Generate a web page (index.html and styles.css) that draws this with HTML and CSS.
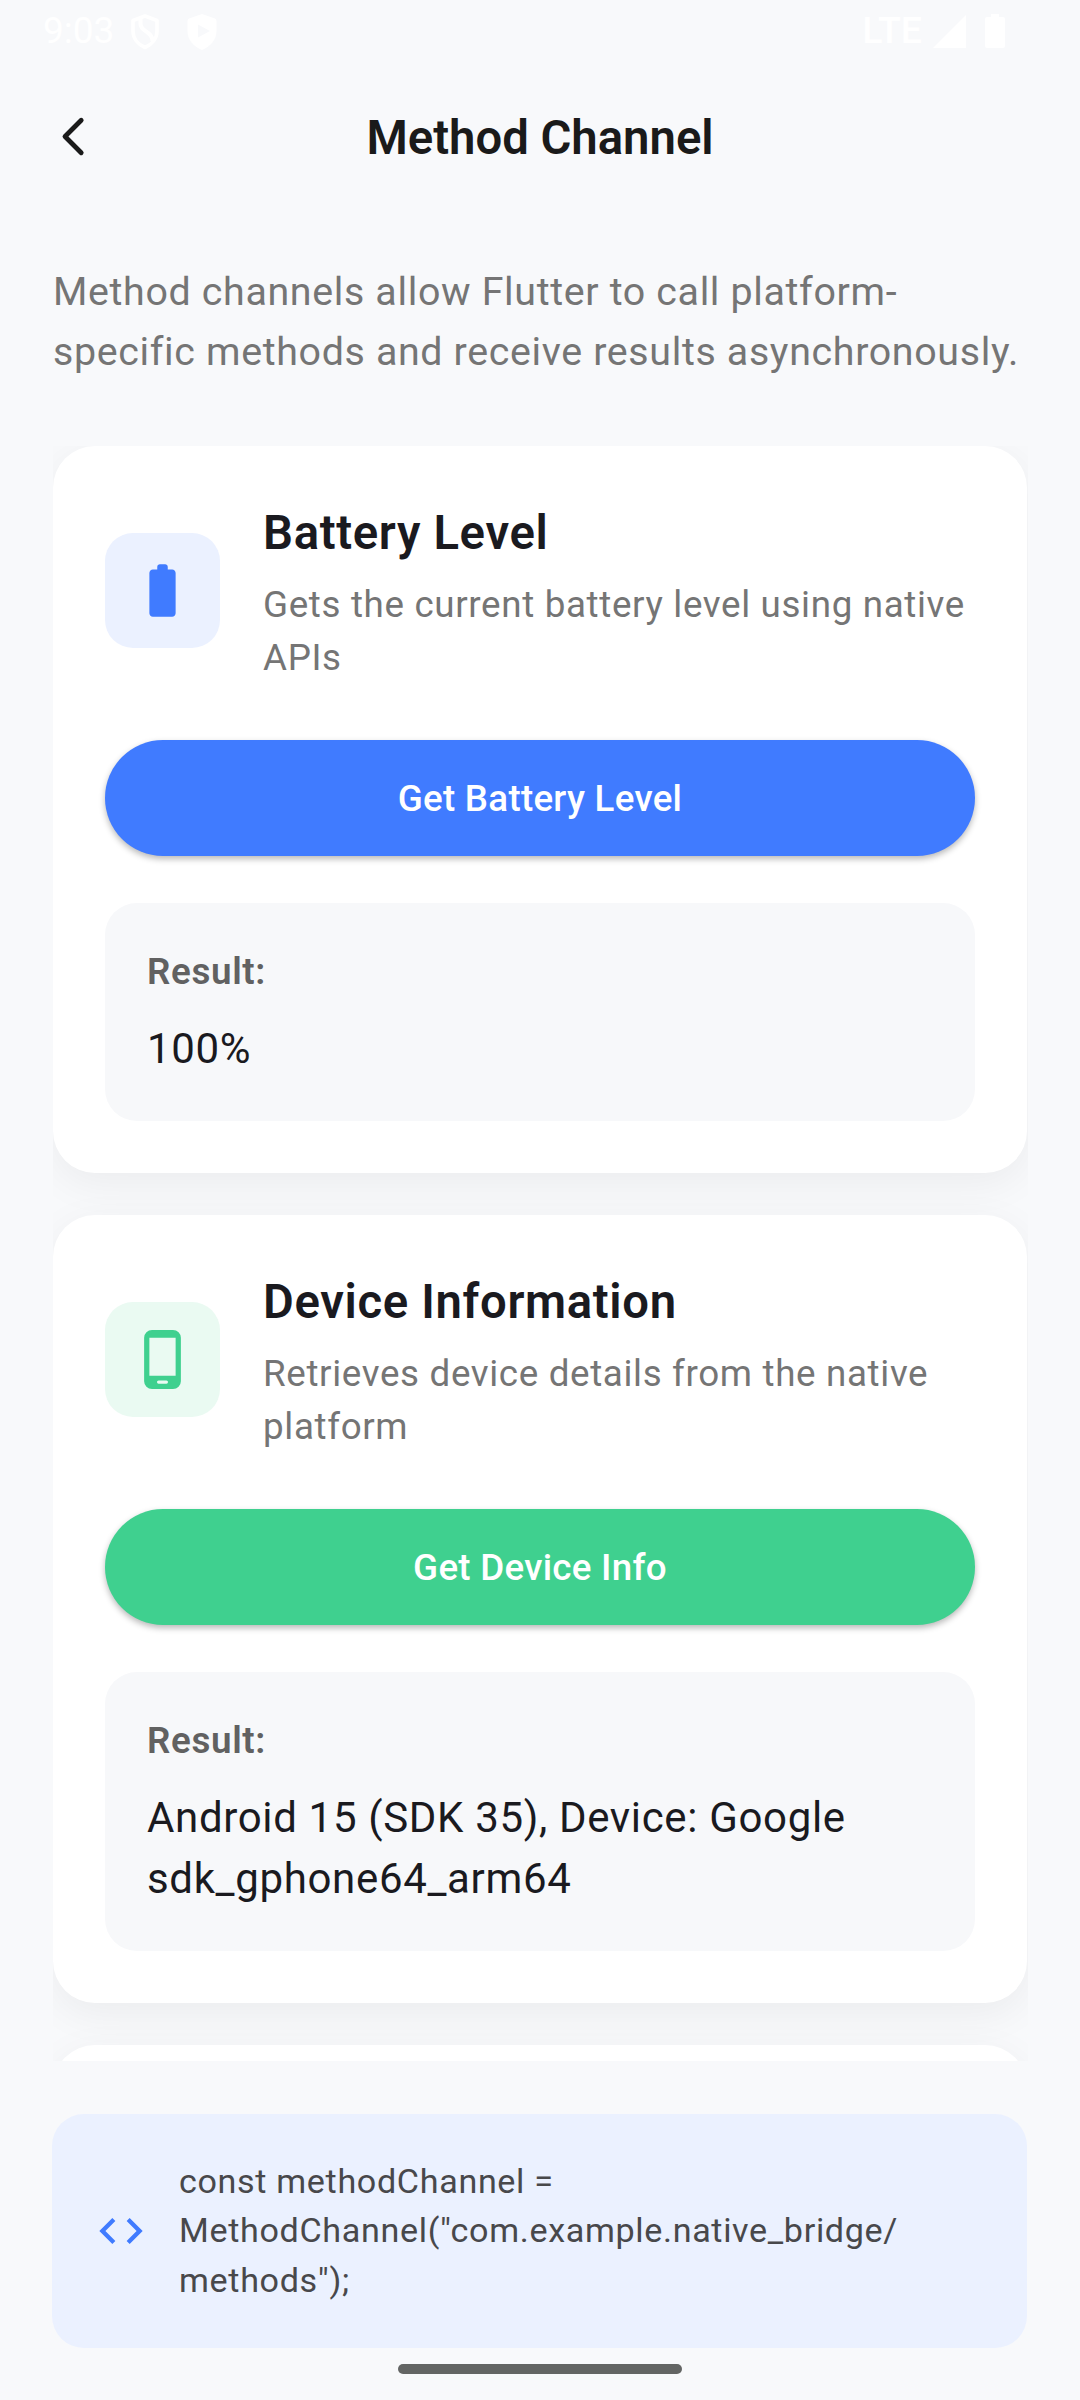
FILE: index.html
```html
<!DOCTYPE html>
<html lang="en"><head><meta charset="utf-8"><title>Method Channel</title><link rel="stylesheet" href="styles.css"></head>
<body>
<div class="status"><div class="status-left"><span class="clock">9:03</span>
<svg class="shield" viewBox="0 0 30 36"><path d="M15 2 27 6.500V17c0 7.500-5 13.500-12 16.500C8 30.500 3 24.500 3 17V6.500Z" fill="none" stroke="#fff" stroke-width="3.600" stroke-linejoin="round"/><path d="M10.500 4v6c0 8 12 7 12 17" fill="none" stroke="#fff" stroke-width="4"/></svg>
<svg class="shield second" viewBox="0 0 30 36"><path d="M15 0 28 4.500Q29.500 5 29.500 7v10c0 9-6 15.500-14.500 19C6.500 32.500.500 26 .500 17V7Q.500 5 2 4.500Z" fill="#fff"/><path d="m11 10.500 12 6.500-12 6.500Z" fill="#f8f9fb"/></svg></div>
<div class="status-right"><span class="lte">LTE</span>
<svg class="signal" viewBox="0 0 33 33"><path d="M0 33h33V0Z" fill="#fff"/></svg>
<svg class="batt" viewBox="0 0 20 34"><path d="M6 0h8v3h4q2 0 2 2v27q0 2-2 2H2q-2 0-2-2V5q0-2 2-2h4Z" fill="#fff"/></svg></div></div>
<header class="bar"><svg class="back" viewBox="0 0 46 46"><path d="M31.200 6.300 15 22.500l16.200 16.200" fill="none" stroke="#1a1a1a" stroke-width="4.800" stroke-linecap="round" stroke-linejoin="round"/></svg><h1>Method Channel</h1></header>
<p class="intro">Method channels allow Flutter to call platform-<br>specific methods and receive results asynchronously.</p>
<main class="list">
<section class="card">
<div class="head"><div class="tile blue-tile"><svg viewBox="0 0 24 24"><path d="M15.670 4H14V3c0-.550-.450-1-1-1h-2c-.550 0-1 .450-1 1v1H8.330C7.600 4 7 4.600 7 5.330v15.330C7 21.400 7.600 22 8.330 22h7.330c.740 0 1.340-.600 1.340-1.330V5.330C17 4.600 16.400 4 15.670 4z"/></svg></div><div class="copy"><h2>Battery Level</h2><p>Gets the current battery level using native<br>APIs</p></div></div>
<button class="btn blue">Get Battery Level</button>
<div class="result"><b>Result:</b><p>100%</p></div></section>
<section class="card">
<div class="head"><div class="tile green-tile"><svg viewBox="0 0 24 24"><path fill-rule="evenodd" d="M8 .750h8a3 3 0 0 1 3 3v16.500a3 3 0 0 1-3 3H8a3 3 0 0 1-3-3V3.750a3 3 0 0 1 3-3zM7 3.750v14.400h10V3.750zM10.500 20a.5.5 0 0 0 0 1.200h3a.5.5 0 0 0 0-1.200z"/></svg></div><div class="copy"><h2>Device Information</h2><p>Retrieves device details from the native<br>platform</p></div></div>
<button class="btn green">Get Device Info</button>
<div class="result"><b>Result:</b><p>Android 15 (SDK 35), Device: Google<br>sdk_gphone64_arm64</p></div></section>
<section class="card"></section>
</main>
<footer class="code"><svg viewBox="0 0 24 24"><path d="M9.400 16.600 4.800 12l4.600-4.600L8 6l-6 6 6 6zm5.200 0 4.600-4.600-4.600-4.600L16 6l6 6-6 6z"/></svg><code>const methodChannel =<br>MethodChannel("com.example.native_bridge/<br>methods");</code></footer>
<div class="handle"></div>
</body></html>
```
FILE: styles.css
```css
*{box-sizing:border-box}
body{margin:0;width:1080px;height:2400px;overflow:hidden;background:#f8f9fb;font-family:Roboto,sans-serif;color:#1a1a1f;display:flex;flex-direction:column}
h1,h2,p{margin:0}
svg{display:block;flex:none}
.status{height:63px;padding:0 75px 0 43px;display:flex;justify-content:space-between;color:#fff;font-size:37px;line-height:61px}
.status-left,.status-right{display:flex;align-items:center}
.clock{padding-bottom:2px}
.shield{width:30px;height:36px;margin-left:16px}
.second{margin-left:27px}
.status-right{padding-bottom:1px}
.lte{font-size:37.500px;font-weight:500;padding-bottom:1px}
.signal{width:33px;height:33px;margin-left:11px}
.batt{width:20px;height:34px;margin-left:19px}
.bar{height:148px;display:grid;grid-template-columns:146px 1fr 146px;align-items:center;text-align:center}
.back{width:46px;height:46px;margin-left:50px}
h1{font-size:47.250px;font-weight:600;line-height:60px;padding-top:2px;color:#1a1a1a}
.intro{margin:51px 53px 0;font-size:39.375px;line-height:60px;letter-spacing:.656px;color:#757575;white-space:nowrap}
.list{margin:64px 52px 0 53px;height:1615px;overflow:hidden;display:flex;flex-direction:column;gap:42px}
.card{flex:none;min-height:200px;margin-right:1px;background:#fff;border-radius:42px;padding:52px;box-shadow:0 10.500px 42px rgba(0,0,0,.055)}
.head{display:flex;align-items:center;gap:43px;height:184px}
.tile{width:115px;height:115px;margin-top:1px;border-radius:28px;display:grid;place-items:center;flex:none}
.tile svg{width:63px;height:63px}
.blue-tile{background:#ebf1ff;fill:#407bff}
.green-tile{background:#eafaf2;fill:#3fd08f}
.copy{align-self:flex-start;padding-top:1px}
h2{font-size:47.250px;font-weight:600;line-height:68px;letter-spacing:.656px}
.copy p{font-size:36.750px;line-height:52.500px;letter-spacing:.656px;color:#757575;margin-top:12px;white-space:nowrap}
.btn{display:block;border:0;width:100%;height:116px;border-radius:58px;margin-top:58px;font:500 36.750px Roboto,sans-serif;letter-spacing:.262px;color:#fff;box-shadow:0 3px 6px rgba(0,0,0,.28)}
.blue{background:#407bff}.green{background:#3fd08f}
.result{margin-top:47px;border-radius:32px;background:#f7f8fa;padding:43px 42px 42px}
.result b{display:block;font-size:36.750px;line-height:52px;font-weight:600;letter-spacing:.656px;color:#616161}
.result p{font-size:42px;line-height:61px;letter-spacing:.656px;margin-top:20px;white-space:nowrap}
.code{margin:53px 53px 0 52px;height:234px;border-radius:32px;background:#ebf1ff;padding:0 43px;display:flex;align-items:center;gap:32px}
.code svg{width:52px;height:52px;fill:#407bff}
code{font:34.125px/49.500px Roboto,sans-serif;letter-spacing:.656px;color:#48484b;white-space:nowrap}
.handle{width:284px;height:10px;border-radius:5px;background:#636564;margin:16px auto 0}
```
